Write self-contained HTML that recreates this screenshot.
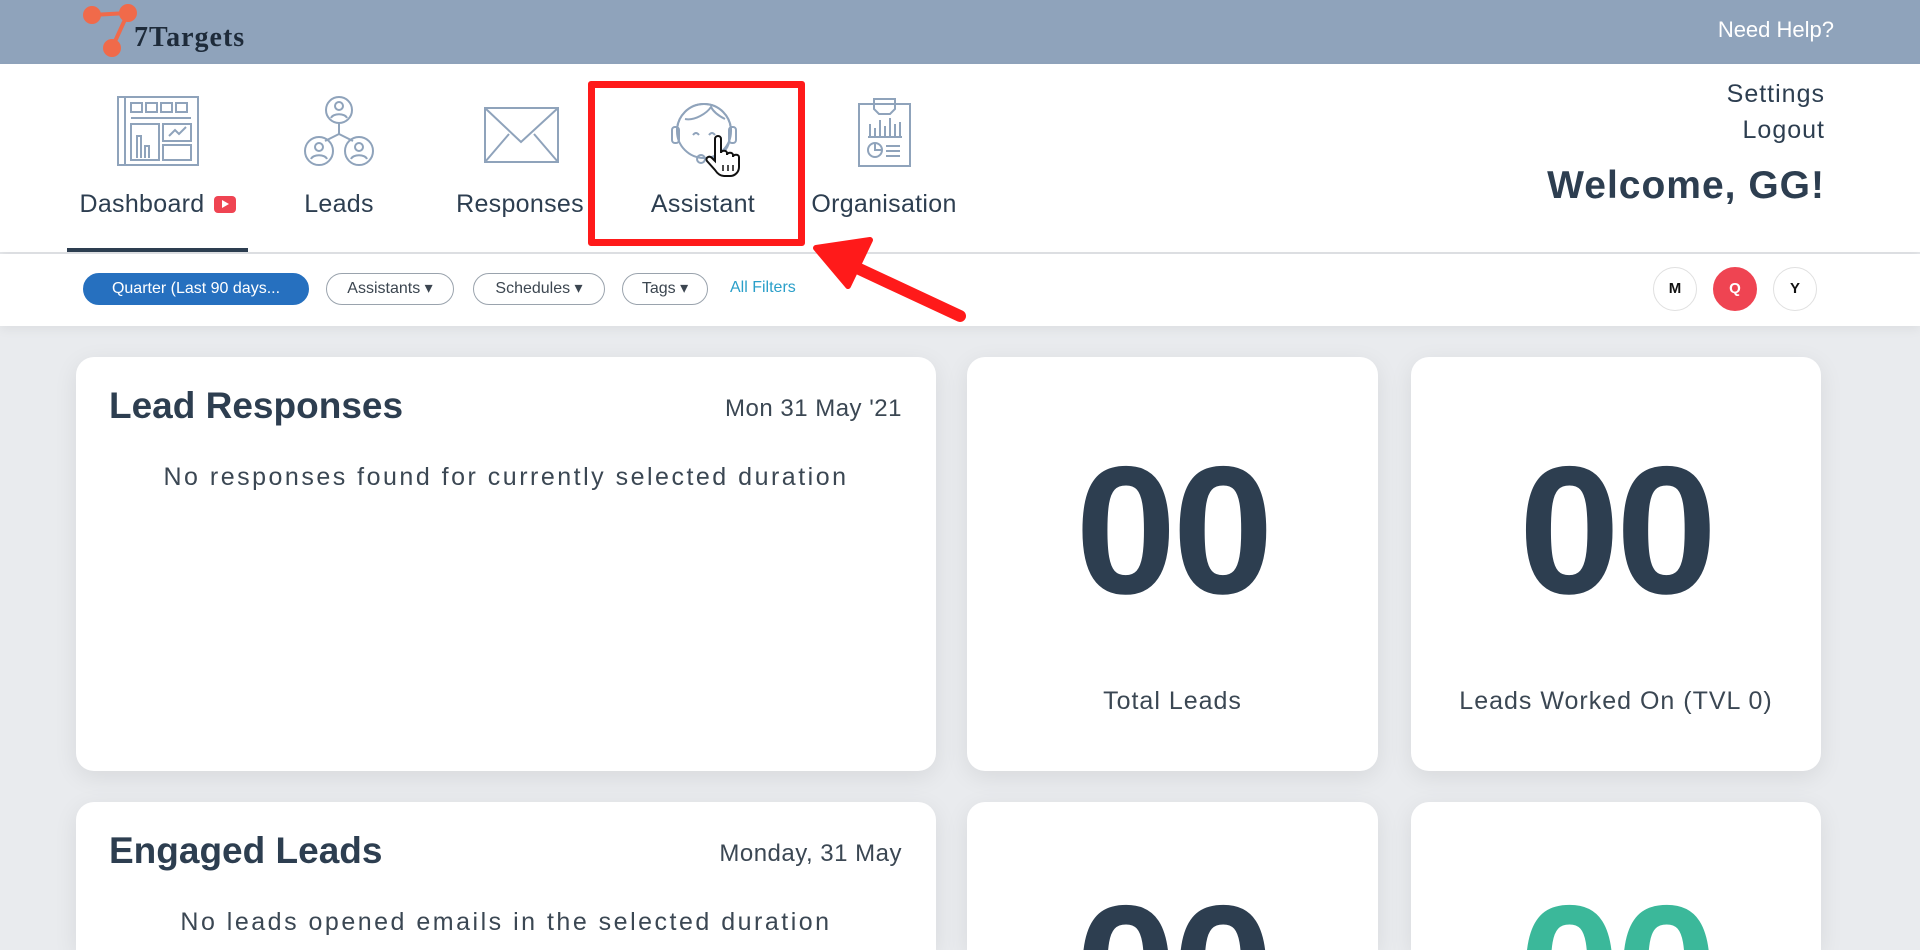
<!DOCTYPE html>
<html style="overflow:hidden"><head><meta charset="utf-8"><style>
*{margin:0;padding:0;box-sizing:border-box}
body{width:1920px;height:950px;overflow:hidden;background:#e9ebee;font-family:"Liberation Sans",sans-serif;color:#2d3e50;position:relative}
.top{position:absolute;left:0;top:0;width:1920px;height:64px;background:#8fa3bb}
.nav{position:absolute;left:0;top:64px;width:1920px;height:188px;background:#fff;box-shadow:0 4px 8px rgba(0,0,0,.06)}
.fbar{position:absolute;left:0;top:254px;width:1920px;height:72px;background:#fff;box-shadow:0 4px 10px rgba(0,0,0,.05)}
.abs{position:absolute}
.lbl{position:absolute;top:190px;font-size:25px;color:#2d3e50;transform:translateX(-50%);white-space:nowrap;letter-spacing:.3px}
.pill{position:absolute;top:273px;height:32px;border:1px solid #9aa3ad;border-radius:16px;font-size:16px;line-height:30px;text-align:center;color:#3c4650;background:#fff}
.circ{position:absolute;top:267px;width:44px;height:44px;border-radius:50%;border:1px solid #e0e0e0;background:#fff;font-size:15px;font-weight:bold;text-align:center;line-height:42px;color:#111}
.card{position:absolute;background:#fff;border-radius:18px;box-shadow:0 6px 24px rgba(0,0,0,.08)}
.big{position:absolute;left:0;width:100%;text-align:center;font-size:182px;font-weight:bold;line-height:1;letter-spacing:-4px}
.sub{position:absolute;left:0;width:100%;text-align:center;font-size:25px;letter-spacing:1px;color:#3b4753}
.ttl{position:absolute;left:33px;font-size:37px;font-weight:bold;color:#2d3e50}
.dt{position:absolute;right:34px;font-size:24px;color:#3b4753;letter-spacing:.5px}
.msg{position:absolute;left:0;width:100%;text-align:center;font-size:25px;letter-spacing:2.5px;color:#3b4753;white-space:nowrap}
svg.ic{position:absolute;fill:none;stroke:#8fa3bb;stroke-width:2}
</style></head><body>
<div class="top"></div>
<svg class="abs" style="left:80px;top:2px" width="60" height="60" viewBox="80 2 60 60"><g stroke="#f06a4a" stroke-width="4" fill="#f06a4a"><line x1="92" y1="15" x2="128" y2="13"/><line x1="128" y1="13" x2="112" y2="48"/><circle cx="92" cy="15" r="7"/><circle cx="128" cy="13" r="7"/><circle cx="112" cy="48" r="7"/></g></svg>
<div class="abs" style="left:134px;top:22px;font-family:'Liberation Serif',serif;font-weight:bold;font-size:28px;letter-spacing:1px;color:#1e2b3a">7Targets</div>
<div class="abs" style="right:86px;top:17px;font-size:22px;color:#fff">Need Help?</div>
<div class="nav"></div>
<svg class="ic" style="left:117px;top:96px" width="82" height="70" viewBox="0 0 82 70"><rect x="1" y="1" width="80" height="68"/><line x1="8" y1="1" x2="8" y2="69"/><rect x="14" y="7" width="11" height="9"/><rect x="29" y="7" width="11" height="9"/><rect x="44" y="7" width="11" height="9"/><rect x="59" y="7" width="11" height="9"/><line x1="14" y1="22" x2="74" y2="22"/><rect x="14" y="28" width="28" height="36"/><rect x="46" y="28" width="28" height="17"/><rect x="46" y="49" width="28" height="15"/><path d="M20 62V40h4v22M28 62V50h4v12M52 40l6-6 4 4 7-7"/></svg>
<svg class="ic" style="left:303px;top:96px" width="72" height="70" viewBox="0 0 72 70"><circle cx="36" cy="14" r="13"/><circle cx="36" cy="10" r="4"/><path d="M28 22c2-5 14-5 16 0"/><line x1="36" y1="27" x2="36" y2="38"/><line x1="36" y1="38" x2="22" y2="45"/><line x1="36" y1="38" x2="50" y2="45"/><circle cx="16" cy="55" r="14"/><circle cx="16" cy="51" r="4"/><path d="M8 63c2-5 14-5 16 0"/><circle cx="56" cy="55" r="14"/><circle cx="56" cy="51" r="4"/><path d="M48 63c2-5 14-5 16 0"/></svg>
<svg class="ic" style="left:484px;top:107px" width="75" height="56" viewBox="0 0 75 56"><rect x="1" y="1" width="73" height="54"/><path d="M1 1l36 34 37-34M1 55l24-28M74 55l-24-28"/></svg>
<svg class="ic" style="left:671px;top:97px" width="66" height="72" viewBox="0 0 66 72"><circle cx="33" cy="34" r="27"/><path d="M6 34a27 27 0 0 1 54 0"/><rect x="1" y="30" width="7" height="16" rx="3"/><rect x="58" y="30" width="7" height="16" rx="3"/><path d="M14 22c10 2 22-6 26-12 3 6 10 10 14 12"/><path d="M22 38q3-4 6 0M38 38q3-4 6 0"/><path d="M58 46c-4 12-14 16-24 16"/><circle cx="30" cy="62" r="4"/></svg>
<svg class="abs" style="left:705px;top:135px" width="36" height="42" viewBox="0 0 36 42"><path d="M10 4c0-4 6-4 6 0v14c0-3 6-3 6 0v2c0-3 6-3 6 0v2c0-3 6-3 6 0v10c0 5-4 9-9 9h-6c-4 0-7-3-9-6L2 26c-2-3 2-6 5-3l3 3z" fill="#fff" stroke="#111" stroke-width="2"/><path d="M18 30v6M23 30v6M28 30v6" stroke="#111" stroke-width="1.5"/></svg>
<svg class="ic" style="left:858px;top:96px" width="53" height="71" viewBox="0 0 53 71"><rect x="1" y="8" width="51" height="62"/><path d="M16 3h21v10l-5 5H21l-5-5z"/><path d="M12 40V28M17 40V32M22 40V24M27 40V30M32 40V22M37 40V28M42 40V26M10 41h34"/><circle cx="17" cy="54" r="7"/><path d="M17 47v7h7M28 50h14M28 55h14M28 60h14"/></svg>
<div class="lbl" style="left:142px">Dashboard</div>
<div class="abs" style="left:214px;top:196px;width:22px;height:17px;background:#ef4452;border-radius:4px"><div style="position:absolute;left:8px;top:4px;border-left:7px solid #fff;border-top:4.5px solid transparent;border-bottom:4.5px solid transparent"></div></div>
<div class="lbl" style="left:339px">Leads</div>
<div class="lbl" style="left:520px">Responses</div>
<div class="lbl" style="left:703px">Assistant</div>
<div class="lbl" style="left:884px">Organisation</div>
<div class="abs" style="left:67px;top:248px;width:181px;height:4px;background:#2d3e50"></div>
<div class="abs" style="right:95px;top:80px;font-size:25px;letter-spacing:1px;color:#2d3e50">Settings</div>
<div class="abs" style="right:95px;top:116px;font-size:25px;letter-spacing:1px;color:#2d3e50">Logout</div>
<div class="abs" style="right:95px;top:164px;font-size:39px;font-weight:bold;letter-spacing:1px;color:#2d3e50">Welcome, GG!</div>
<div class="abs" style="left:588px;top:81px;width:217px;height:165px;border:7px solid #ff1a1a;border-radius:3px"></div>
<div class="fbar"></div>
<div class="pill" style="left:83px;width:226px;background:#2670bf;border-color:#2670bf;color:#fff">Quarter (Last 90 days...</div>
<div class="pill" style="left:326px;width:128px">Assistants ▾</div>
<div class="pill" style="left:473px;width:132px">Schedules ▾</div>
<div class="pill" style="left:622px;width:86px">Tags ▾</div>
<div class="abs" style="left:730px;top:279px;font-size:16px;color:#2a9fc9">All Filters</div>
<div class="circ" style="left:1653px">M</div>
<div class="circ" style="left:1713px;background:#ef4452;border-color:#ef4452;color:#fff">Q</div>
<div class="circ" style="left:1773px">Y</div>
<svg class="abs" style="left:800px;top:230px" width="180" height="100" viewBox="0 0 180 100"><line x1="160" y1="86" x2="40" y2="30" stroke="#ff1a1a" stroke-width="12" stroke-linecap="round"/><path d="M16 18L70 10L48 56Z" fill="#ff1a1a" stroke="#ff1a1a" stroke-width="6" stroke-linejoin="round"/></svg>
<div class="card" style="left:76px;top:357px;width:860px;height:414px">
<div class="ttl" style="top:28px">Lead Responses</div>
<div class="dt" style="top:38px">Mon 31 May '21</div>
<div class="msg" style="top:106px">No responses found for currently selected duration</div>
</div>
<div class="card" style="left:967px;top:357px;width:411px;height:414px">
<div class="big" style="top:82px">00</div><div class="sub" style="top:330px">Total Leads</div></div>
<div class="card" style="left:1411px;top:357px;width:410px;height:414px">
<div class="big" style="top:82px">00</div><div class="sub" style="top:330px">Leads Worked On (TVL 0)</div></div>
<div class="card" style="left:76px;top:802px;width:860px;height:148px;border-radius:18px 18px 0 0">
<div class="ttl" style="top:28px">Engaged Leads</div>
<div class="dt" style="top:38px">Monday, 31 May</div>
<div class="msg" style="top:106px">No leads opened emails in the selected duration</div>
</div>
<div class="card" style="left:967px;top:802px;width:411px;height:148px;overflow:hidden;border-radius:18px 18px 0 0">
<div class="big" style="top:76px">00</div></div>
<div class="card" style="left:1411px;top:802px;width:410px;height:148px;overflow:hidden;border-radius:18px 18px 0 0">
<div class="big" style="top:76px;color:#3bb89a">00</div></div>
</body></html>
